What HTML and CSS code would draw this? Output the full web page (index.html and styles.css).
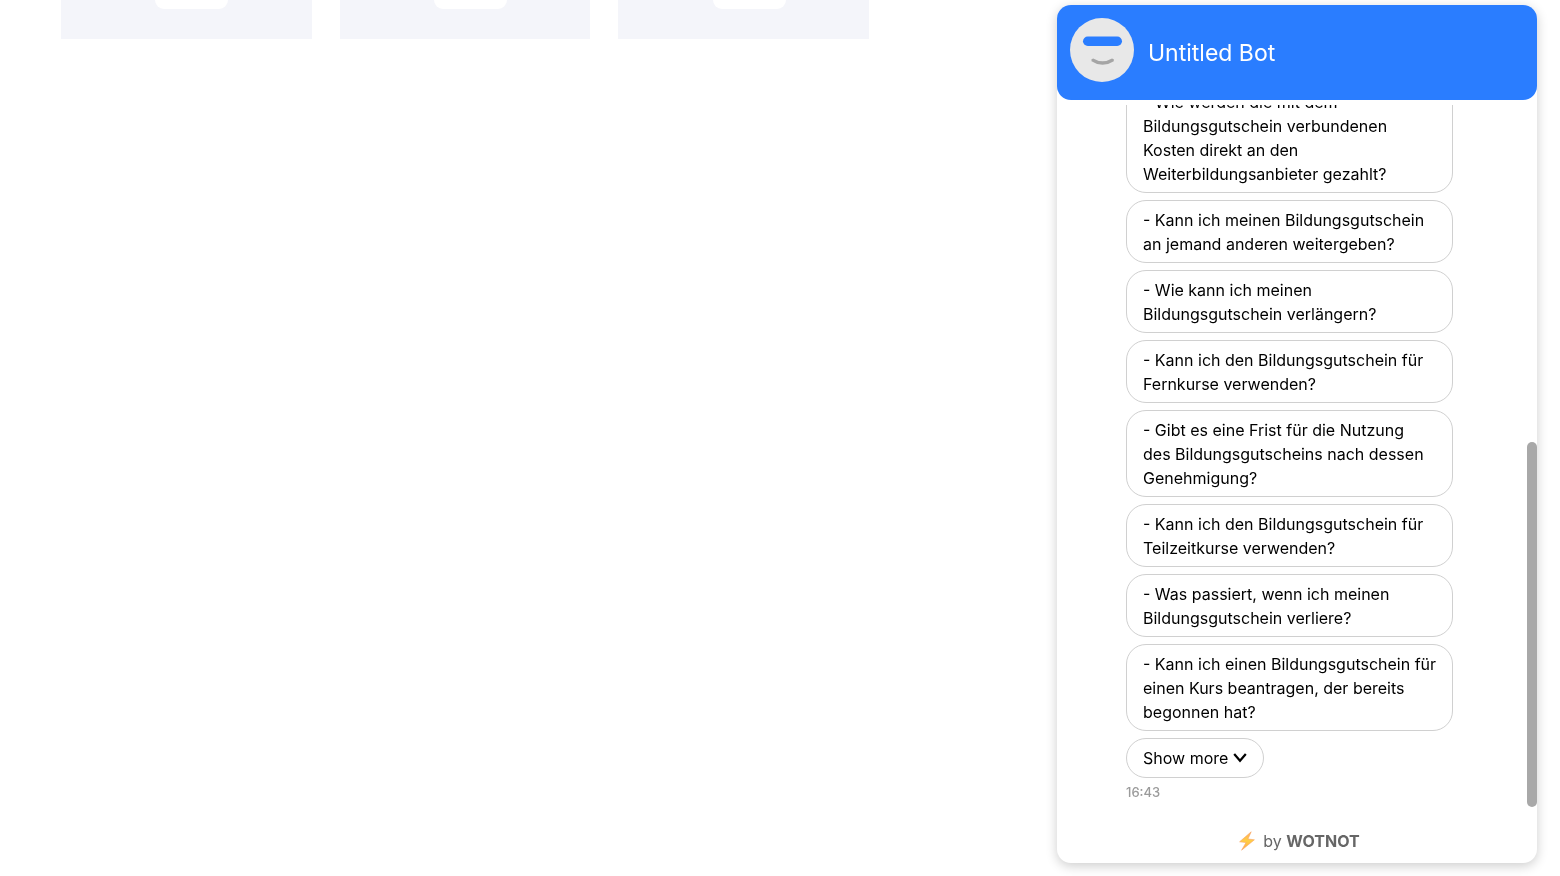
FILE: index.html
```html
<!DOCTYPE html>
<html lang="de">
<head>
<meta charset="utf-8">
<meta name="viewport" content="width=device-width, initial-scale=1">
<title>Untitled Bot</title>
<link rel="stylesheet" href="styles.css">
</head>
<body>
<main class="cards">
  <div class="card"><div class="card-chip"></div></div>
  <div class="card"><div class="card-chip"></div></div>
  <div class="card"><div class="card-chip"></div></div>
</main>

<section class="chat" aria-label="Chat">
  <header class="chat-header">
    <svg class="avatar" viewBox="0 0 64 64" aria-hidden="true">
      <circle cx="32" cy="32" r="32" fill="#e8e8e8"/>
      <rect x="13" y="18.500" width="39" height="9.500" rx="4.750" fill="#2a7dff"/>
      <path d="M21.500 41.200L23.200 40.400Q32.500 46 42 40.400L43.800 41.200L43.800 43.200Q32.500 50.500 21.500 43.200Z" fill="#a5a5a5"/>
    </svg>
    <h1 class="bot-name">Untitled Bot</h1>
  </header>

  <div class="chat-body">
    <div class="messages">
      <button class="reply" type="button">- Wie werden die mit dem<br>Bildungsgutschein verbundenen<br>Kosten direkt an den<br>Weiterbildungsanbieter gezahlt?</button>
      <button class="reply" type="button">- Kann ich meinen Bildungsgutschein<br>an jemand anderen weitergeben?</button>
      <button class="reply" type="button">- Wie kann ich meinen<br>Bildungsgutschein verlängern?</button>
      <button class="reply" type="button">- Kann ich den Bildungsgutschein für<br>Fernkurse verwenden?</button>
      <button class="reply" type="button">- Gibt es eine Frist für die Nutzung<br>des Bildungsgutscheins nach dessen<br>Genehmigung?</button>
      <button class="reply" type="button">- Kann ich den Bildungsgutschein für<br>Teilzeitkurse verwenden?</button>
      <button class="reply" type="button">- Was passiert, wenn ich meinen<br>Bildungsgutschein verliere?</button>
      <button class="reply" type="button">- Kann ich einen Bildungsgutschein für<br>einen Kurs beantragen, der bereits<br>begonnen hat?</button>
      <button class="reply show-more" type="button">Show more
        <svg class="chevron" viewBox="0 0 14 10" aria-hidden="true"><path d="M1.200 1L7 7.800L12.800 1" fill="none" stroke="#000" stroke-width="2.200"/></svg>
      </button>
      <time class="time">16:43</time>
    </div>
    <div class="scroll-thumb"></div>
  </div>

  <footer class="chat-footer">
    <svg class="bolt" viewBox="0 0 18 20" aria-hidden="true">
      <defs><linearGradient id="bolt-fill" x1="0" y1="0" x2="0" y2="1"><stop offset="0" stop-color="#ffb05a"/><stop offset=".5" stop-color="#ffce45"/><stop offset="1" stop-color="#ffa84a"/></linearGradient></defs>
      <path d="M13.200 .8L1.600 10.800L8 11.600L3.600 19.200L16.400 8.800L10 8Z" fill="url(#bolt-fill)" stroke="#f9a566" stroke-width=".6" stroke-linejoin="round"/>
    </svg>
    <span>by <a class="brand" href="#">WOTNOT</a></span>
  </footer>
</section>
</body>
</html>
```

FILE: styles.css
```css
* {
  box-sizing: border-box;
}

body {
  margin: 0;
  min-height: 100vh;
  background: #fff;
  color: #000;
  font-family: Inter, "Liberation Sans", sans-serif;
  font-size: 16px;
  line-height: 24px;
}

.cards {
  display: grid;
  grid-template-columns: repeat(3, 1fr);
  gap: 28px;
  margin: 0 691px 0 61px;
}

.card {
  padding: 0 0 30px 11px;
  background: #f4f5fa;
}

.card-chip {
  width: 73px;
  height: 9px;
  margin: 0 auto;
  border-radius: 0 0 10px 10px;
  background: #fff;
}

.chat {
  position: fixed;
  top: 5px;
  right: 23px;
  bottom: 13px;
  width: 480px;
  display: flex;
  flex-direction: column;
  border-radius: 14px;
  background: #fff;
  box-shadow: 0 3px 12px rgba(0, 0, 0, 0.2);
}

.chat-header {
  display: flex;
  align-items: center;
  gap: 14px;
  padding: 13px 13px 18px;
  border-radius: 14px;
  background: #2a7dff;
  color: #fff;
}

.avatar {
  width: 64px;
  height: 64px;
}

.bot-name {
  margin: 0;
  padding-top: 6px;
  font-size: 23px;
  font-weight: 400;
  line-height: 32px;
}

.chat-body {
  position: relative;
  flex: 1;
  min-height: 0;
  margin-top: 5px;
  display: flex;
  flex-direction: column;
  justify-content: flex-end;
  overflow: hidden;
}

.messages {
  display: flex;
  flex-direction: column;
  align-items: flex-start;
  gap: 7px;
  padding: 0 84px 8px 69px;
}

.reply {
  width: 100%;
  flex-shrink: 0;
  padding: 7px 16px 6px;
  border: 1px solid #d0d0d0;
  border-radius: 20px;
  background: #fff;
  color: inherit;
  font: inherit;
  text-align: left;
  white-space: nowrap;
}

.show-more {
  display: flex;
  align-items: center;
  gap: 5px;
  width: auto;
  padding: 7px 16px;
}

.chevron {
  width: 14px;
  height: 10px;
}

.time {
  color: #9b9b9b;
  font-size: 13px;
  font-weight: 500;
  line-height: 14px;
}

.scroll-thumb {
  position: absolute;
  right: 0;
  bottom: 0;
  width: 10px;
  height: 52%;
  border-radius: 5px;
  background: #a8a8a8;
}

.chat-footer {
  display: flex;
  align-items: center;
  justify-content: center;
  gap: 7px;
  padding: 22px 0 10px 4px;
  color: #666;
}

.bolt {
  width: 18px;
  height: 20px;
}

.brand {
  color: inherit;
  font-weight: 700;
  text-decoration: none;
}
```
